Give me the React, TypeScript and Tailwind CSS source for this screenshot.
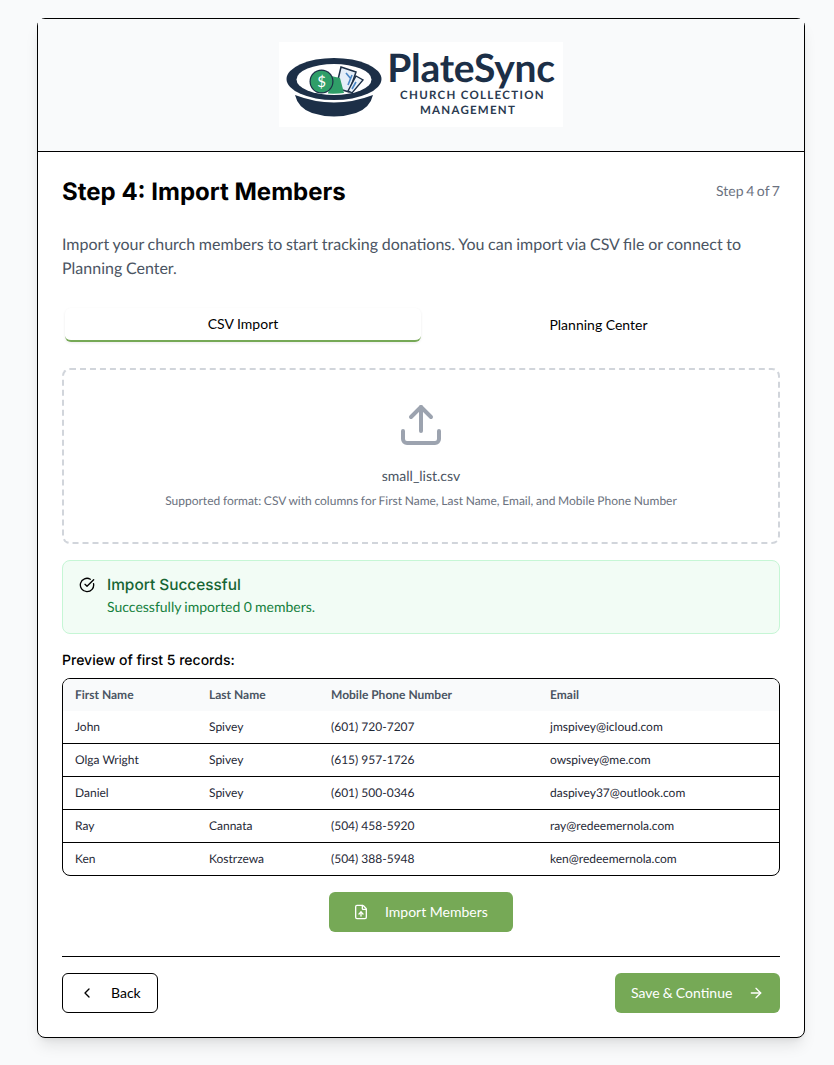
import { ArrowRight, ChevronLeft, CircleCheckBig, FileUp, Upload } from "lucide-react"

const members = [
  { first: "John", last: "Spivey", phone: "(601) 720-7207", email: "jmspivey@icloud.com" },
  { first: "Olga Wright", last: "Spivey", phone: "(615) 957-1726", email: "owspivey@me.com" },
  { first: "Daniel", last: "Spivey", phone: "(601) 500-0346", email: "daspivey37@outlook.com" },
  { first: "Ray", last: "Cannata", phone: "(504) 458-5920", email: "ray@redeemernola.com" },
  { first: "Ken", last: "Kostrzewa", phone: "(504) 388-5948", email: "ken@redeemernola.com" },
]

function BowlIcon() {
  return (
    <svg width="96" height="60" viewBox="0 0 96 60" className="shrink-0">
      {/* bowl base */}
      <path d="M9 37 Q48 52 87 37 Q84 50 70 55 Q48 62 26 55 Q12 50 9 37Z" fill="#1c2f47" />
      {/* rim */}
      <ellipse cx="48" cy="21" rx="47.5" ry="21" fill="#1c2f47" />
      <ellipse cx="48" cy="21.5" rx="37.5" ry="15.5" fill="#ffffff" />
      {/* notes */}
      <path d="M55 9 L70 14 L63 34 L50 30Z" fill="#e4eef8" stroke="#1c2f47" strokeWidth="1.5" />
      <path d="M60 15 L65 21 M62 27 L66 17" stroke="#4a86c5" strokeWidth="1.6" />
      <path d="M70 18 L77 22 L66 35 L62 33Z" fill="#eaf2fa" stroke="#1c2f47" strokeWidth="1.4" />
      <path d="M70 24 L66 31" stroke="#4a86c5" strokeWidth="1.6" />
      <path d="M45 18 L54 20 L58 35 Q50 36 42 35.5Z" fill="#2f9e68" />
      {/* coin */}
      <circle cx="35.5" cy="23.5" r="12" fill="#1c2f47" />
      <circle cx="35.5" cy="23.5" r="10.8" fill="#2f9e68" />
      <text x="35.5" y="29" textAnchor="middle" fontSize="15" fontWeight="400" fill="#ffffff" fontFamily="Lato, sans-serif">
        $
      </text>
    </svg>
  )
}

function Logo() {
  return (
    <div className="flex h-[85px] w-[284px] bg-white pl-[7px] pt-[16px]">
      <BowlIcon />
      <div className="ml-[6px] -mt-[14px] flex w-[166px] flex-col items-center text-[#1c2f47]">
        <div className="text-[39px] leading-[48px] font-bold tracking-[-0.25px]">PlateSync</div>
        <div className="mt-[-4px] pl-[3px] text-[11.5px] leading-[15px] font-bold tracking-[1.3px] whitespace-nowrap text-[#2a3a50]">CHURCH COLLECTION</div>
        <div className="pr-[6px] text-[11.5px] leading-[15px] font-bold tracking-[1.25px] text-[#2a3a50]">MANAGEMENT</div>
      </div>
    </div>
  )
}

export default function App() {
  return (
    <div className="min-h-[1065px] bg-[#f9fafb] pt-[18px] pl-[37px] font-['Lato',sans-serif] [text-rendering:geometricPrecision]">
      <div className="w-[768px] h-[1020px] rounded-lg border border-black bg-white shadow-lg">
        {/* Header */}
        <div className="flex h-[133px] items-start justify-center border-b border-black bg-[#f9fafb] pt-[23px]">
          <Logo />
        </div>

        <div className="px-6 pt-6">
          <div className="flex items-start justify-between">
            <h1 className="font-['Inter',sans-serif] text-2xl font-bold text-black">Step 4: Import Members</h1>
            <span className="mt-[5px] text-sm text-[#6b7280] [word-spacing:-1px]">Step 4 of 7</span>
          </div>

          <p className="mt-[25px] text-base text-[#4b5563] [word-spacing:-0.4px]">
            Import your church members to start tracking donations. You can import via CSV file or connect to Planning Center.
          </p>

          {/* Tabs */}
          <div className="mt-[27px] grid grid-cols-2 px-[3px]">
            <button className="h-[34px] rounded-md border-b-2 border-[#76a956] bg-white text-sm text-black shadow-[0_1px_3px_rgba(0,0,0,0.08)]">
              CSV Import
            </button>
            <button className="h-[34px] pr-[1px] text-sm text-black">Planning Center</button>
          </div>

          {/* Dropzone */}
          <div className="mt-[26px] flex h-[176px] flex-col items-center rounded-lg border-2 border-dashed border-[#d1d5db] pt-[31px]">
            <Upload className="h-12 w-12 text-[#9ca3af]" strokeWidth={2} />
            <p className="mt-[17px] text-sm text-[#4b5563]">small_list.csv</p>
            <p className="mt-[7px] text-xs text-[#6b7280] [word-spacing:-0.35px]">
              Supported format: CSV with columns for First Name, Last Name, Email, and Mobile Phone Number
            </p>
          </div>

          {/* Success alert */}
          <div className="mt-4 flex h-[74px] gap-[12px] rounded-lg border border-[#c6f6d5] bg-[#f2fcf5] pl-[16px] pt-[15px]">
            <CircleCheckBig className="mt-[1px] h-4 w-4 text-black" />
            <div>
              <div className="font-['Inter',sans-serif] text-[15.4px] leading-[18px] font-medium text-[#166534]">Import Successful</div>
              <div className="mt-[4px] text-sm leading-[18px] text-[#15803d] [word-spacing:-0.3px]">Successfully imported 0 members.</div>
            </div>
          </div>

          {/* Preview */}
          <h3 className="mt-[17px] font-['Inter',sans-serif] text-sm leading-[20px] font-medium text-black">Preview of first 5 records:</h3>
          <div className="mt-[7px] overflow-hidden rounded-lg border border-black">
            <table className="w-full table-fixed text-left text-xs">
              <thead>
                <tr className="h-[32px] bg-[#f9fafb] text-[#4b5563]">
                  <th className="w-[146px] pl-3 font-bold">First Name</th>
                  <th className="w-[122px] font-bold">Last Name</th>
                  <th className="w-[219px] font-bold">Mobile Phone Number</th>
                  <th className="font-bold">Email</th>
                </tr>
              </thead>
              <tbody className="text-[#1f2937]">
                {members.map((m, i) => (
                  <tr
                    key={m.email}
                    className={i === 0 ? "h-[32px] border-b border-black" : i < members.length - 1 ? "h-[33px] border-b border-black" : "h-[33px]"}
                  >
                    <td className="pl-3">{m.first}</td>
                    <td>{m.last}</td>
                    <td>{m.phone}</td>
                    <td>{m.email}</td>
                  </tr>
                ))}
              </tbody>
            </table>
          </div>

          <div className="mt-4 flex justify-center">
            <button className="flex h-10 w-[184px] items-center rounded-md bg-[#76a956] pl-[24px] text-sm text-white">
              <FileUp className="h-4 w-4" />
              <span className="ml-[16px]">Import Members</span>
            </button>
          </div>

          {/* Footer nav */}
          <div className="mt-6 flex justify-between border-t border-black pt-4">
            <button className="flex h-10 w-[96px] items-center rounded-md border border-black bg-white pl-[16px] text-sm text-black">
              <ChevronLeft className="h-4 w-4" />
              <span className="ml-[16px]">Back</span>
            </button>
            <button className="flex h-10 w-[165px] items-center rounded-md bg-[#76a956] pl-[16px] text-sm text-white">
              <span className="[word-spacing:-0.5px]">Save &amp; Continue</span>
              <ArrowRight className="ml-[16px] h-4 w-4" />
            </button>
          </div>
        </div>
      </div>
    </div>
  )
}
